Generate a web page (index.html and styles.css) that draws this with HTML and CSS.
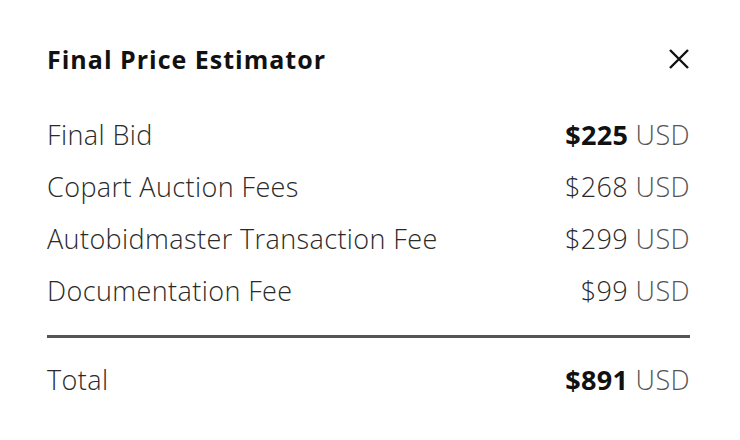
FILE: index.html
```html
<!DOCTYPE html>
<html>
  <head>
    <link rel="stylesheet" href="styles.css">
  </head>
  <body>
    <div class="estimator">
      <div class="estimator_header">
        <h2 class="title">Final Price Estimator</h2>
        <button class="close" aria-label="Close">
          <svg width="22" height="22" viewBox="0 0 22 22"><path d="M2 2 L20 20 M20 2 L2 20" stroke="#111" stroke-width="2.4" fill="none"/></svg>
        </button>
      </div>
      <ul class="fees">
        <li><span class="label">Final Bid</span><span class="price"><b>$225</b> <span class="cur">USD</span></span></li>
        <li><span class="label">Copart Auction Fees</span><span class="price">$268 <span class="cur">USD</span></span></li>
        <li><span class="label">Autobidmaster Transaction Fee</span><span class="price">$299 <span class="cur">USD</span></span></li>
        <li><span class="label">Documentation Fee</span><span class="price">$99 <span class="cur">USD</span></span></li>
      </ul>
      <div class="total">
        <span class="label">Total</span><span class="price"><b>$891</b> <span class="cur">USD</span></span>
      </div>
    </div>
  </body>
</html>
```

FILE: styles.css
```css
*{
    margin:0;
    padding:0;
}
body{
    background:#fff;
    font-family:"Open Sans", sans-serif;
    color:#2a2a2a;
}
.estimator{
    padding:39px 50px 0 47px;
}
.estimator_header{
    display:flex;
    justify-content:space-between;
    align-items:center;
    height:40px;
}
.title{
    font-size:25px;
    font-weight:700;
    letter-spacing:1px;
    color:#111;
}
.close{
    border:none;
    background:none;
    width:22px;
    height:22px;
    cursor:pointer;
}
.fees{
    list-style:none;
    margin-top:30px;
    border-bottom:3px solid #555;
    padding-bottom:18px;
}
.fees li, .total{
    display:flex;
    justify-content:space-between;
    font-size:27px;
    font-weight:300;
    letter-spacing:0.4px;
    line-height:52px;
}
.total{
    margin-top:16px;
}
.price b{
    font-weight:700;
    letter-spacing:0.3px;
    color:#111;
}
.cur{
    color:#555;
}
```
